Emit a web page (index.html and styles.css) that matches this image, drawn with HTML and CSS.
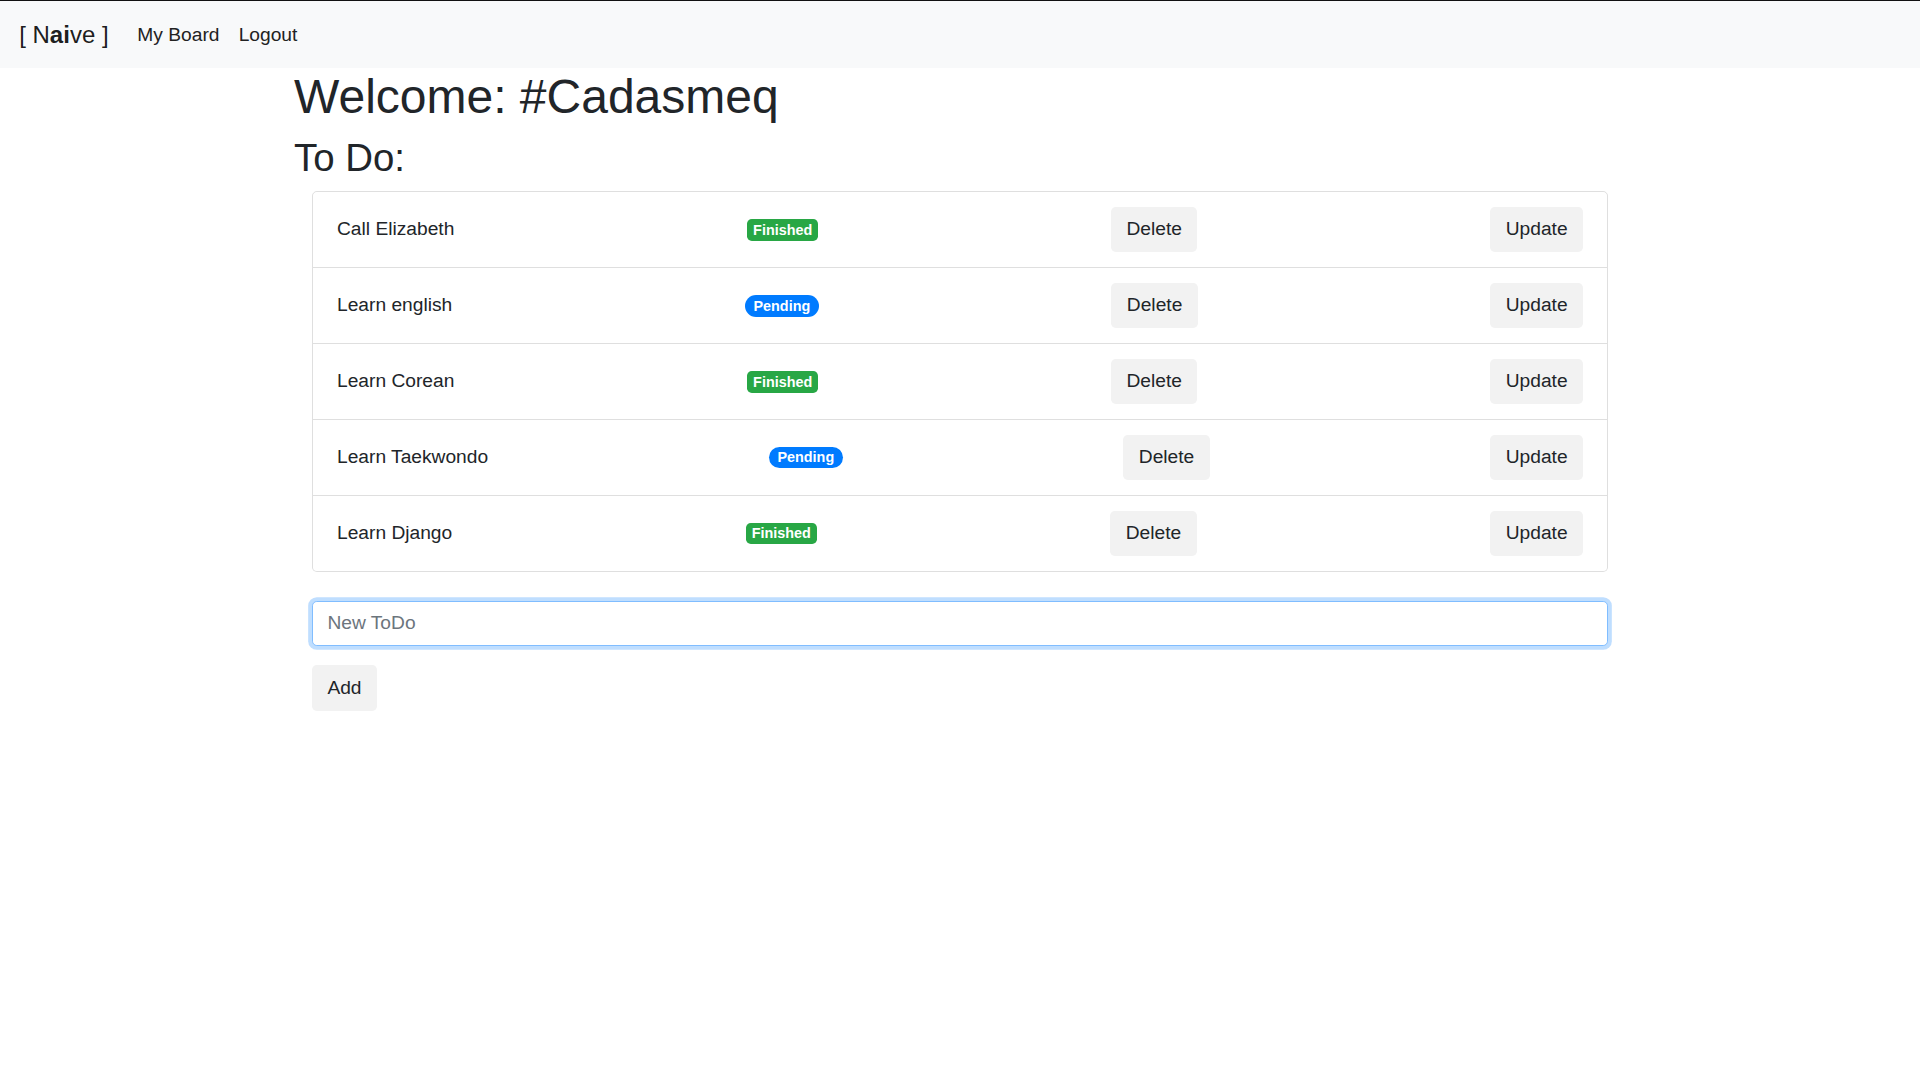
FILE: index.html
```html
<!DOCTYPE html>
<html lang="en">
<head>
<meta charset="utf-8">
<title>Naive - My Board</title>
<link rel="stylesheet" href="styles.css">
</head>
<body>
<nav class="navbar">
  <a class="brand" href="#">[ N<b>ai</b>ve ]</a>
  <a class="nav-link" href="#">My Board</a>
  <a class="nav-link" href="#">Logout</a>
</nav>
<main class="container">
  <h1 class="title">Welcome: #Cadasmeq</h1>
  <h2 class="subtitle">To Do:</h2>
  <div class="inner">
    <ul class="todo-list">
      <li class="todo-item"><span class="todo-text">Call Elizabeth</span><span class="badge badge-success">Finished</span><button class="btn">Delete</button><button class="btn">Update</button></li>
      <li class="todo-item"><span class="todo-text">Learn english</span><span class="badge badge-primary badge-pill">Pending</span><button class="btn">Delete</button><button class="btn">Update</button></li>
      <li class="todo-item"><span class="todo-text">Learn Corean</span><span class="badge badge-success">Finished</span><button class="btn">Delete</button><button class="btn">Update</button></li>
      <li class="todo-item"><span class="todo-text">Learn Taekwondo</span><span class="badge badge-primary badge-pill">Pending</span><button class="btn">Delete</button><button class="btn">Update</button></li>
      <li class="todo-item"><span class="todo-text">Learn Django</span><span class="badge badge-success">Finished</span><button class="btn">Delete</button><button class="btn">Update</button></li>
    </ul>
    <form class="add-form">
      <input class="form-control" type="text" placeholder="New ToDo">
      <button class="btn" type="button">Add</button>
    </form>
  </div>
</main>
</body>
</html>
```
FILE: styles.css
```css
* { box-sizing: border-box; }
html, body { margin: 0; padding: 0; }
body {
  font-family: "Liberation Sans", Arial, sans-serif;
  font-size: 19.2px;
  line-height: 1.5;
  color: #212529;
  background: #fff;
}
.navbar {
  display: flex;
  align-items: center;
  background: #f8f9fa;
  border-top: 1px solid #111;
  padding: 10.4px 19.2px 8.8px;
}
.brand {
  font-size: 24px;
  line-height: 36px;
  padding: 6px 0;
  margin-right: 19.2px;
  color: rgba(0,0,0,.9);
  text-decoration: none;
}
.brand b { font-weight: 700; }
.nav-link {
  color: #222;
  text-decoration: none;
  padding: 9.6px 9.6px;
  line-height: 28.8px;
}
.container {
  max-width: 1368px;
  margin: 0 auto;
  padding: 0 18px;
}
.title {
  margin: 0 0 9.6px;
  font-size: 48px;
  line-height: 1.2;
  font-weight: 400;
}
.subtitle {
  margin: 0 0 9.6px;
  font-size: 38.4px;
  line-height: 1.2;
  font-weight: 400;
}
.inner { padding: 0 18px; }
.todo-list {
  list-style: none;
  margin: 0;
  padding: 0;
}
.todo-item {
  display: flex;
  align-items: center;
  justify-content: space-between;
  padding: 15.2px 24px 14.6px;
  border: 1px solid rgba(0,0,0,.125);
  border-top-width: 0;
}
.todo-item:first-child {
  border-top-width: 1px;
  border-top-left-radius: 4.8px;
  border-top-right-radius: 4.8px;
}
.todo-item:last-child {
  border-bottom-left-radius: 4.8px;
  border-bottom-right-radius: 4.8px;
}
.badge {
  display: inline-block;
  font-size: 14.4px;
  font-weight: 700;
  line-height: 1;
  color: #fff;
  padding: 3.6px 5.76px;
  border-radius: 4.8px;
}
.badge-pill {
  padding-left: 8.64px;
  padding-right: 8.64px;
  border-radius: 192px;
}
.badge-success { background: #28a745; }
.badge-primary { background: #007bff; }
.btn {
  font-family: inherit;
  font-size: 19.2px;
  line-height: 28.8px;
  color: #212529;
  background: #f2f2f2;
  border: 1px solid transparent;
  border-radius: 4.8px;
  padding: 7.2px 14.4px;
  cursor: pointer;
}
.add-form {
  margin-top: 28.8px;
  display: flex;
  flex-direction: column;
  align-items: flex-start;
  gap: 19.2px;
}
.form-control {
  width: 100%;
  height: 45.6px;
  font-family: inherit;
  font-size: 19.2px;
  line-height: 28.8px;
  padding: 7.2px 14.4px;
  color: #495057;
  background: #fff;
  border: 1px solid #80bdff;
  border-radius: 4.8px;
  box-shadow: 0 0 0 3.84px rgba(0,123,255,.25);
  outline: none;
}
.form-control::placeholder { color: #6c757d; opacity: 1; }
```
